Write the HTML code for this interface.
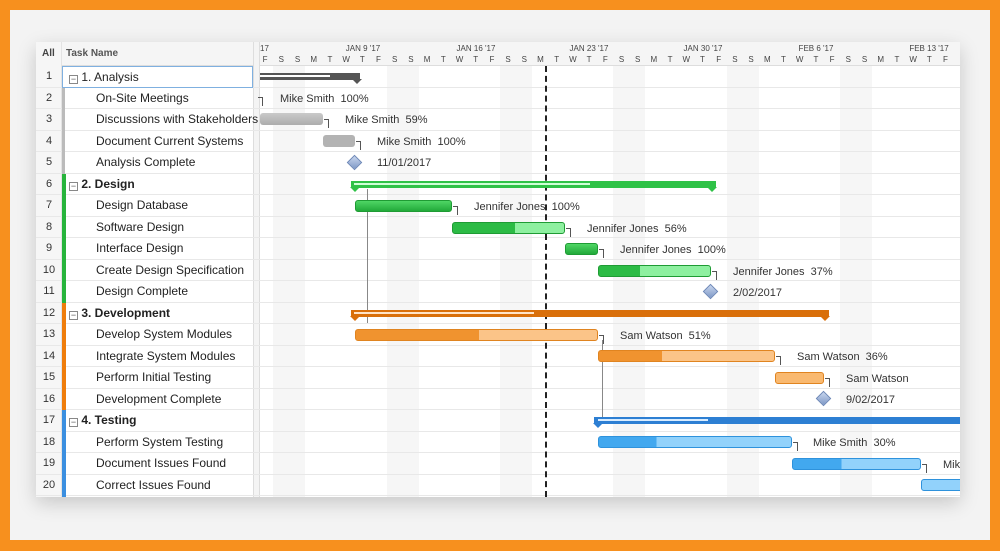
<!DOCTYPE html>
<html><head><meta charset="utf-8"><style>
*{margin:0;padding:0;box-sizing:border-box}
body{width:1000px;height:551px;background:#f7901e;position:relative;overflow:hidden;font-family:"Liberation Sans",sans-serif;color:#222}
.inner{position:absolute;left:10px;top:10px;width:980px;height:530px;background:#f3f3f3}
.card{position:absolute;left:36px;top:42px;width:924px;height:455px;background:#fff;box-shadow:0 6px 18px rgba(0,0,0,.18);overflow:hidden}
.a{position:absolute}
.row{position:absolute;left:0;width:924px;height:21.5px;border-bottom:1px solid #e8e8e8}
.num{position:absolute;left:0;width:26px;text-align:center;font-size:11px;color:#333;line-height:21px}
.tn{position:absolute;font-size:12px;line-height:21px;white-space:nowrap}
.bar{position:absolute;height:12px;border-radius:3px}
.lbl{position:absolute;font-size:11px;white-space:nowrap;color:#333;line-height:12px}
.dh{position:absolute;top:13px;width:16.2px;text-align:center;font-size:8px;color:#444}
.wk{position:absolute;top:2px;font-size:8px;color:#444;transform:translateX(-50%);white-space:nowrap}
.ws{position:absolute;top:0;height:455px;width:32.4px;background:#f6f6f6}
.dia{position:absolute;width:11px;height:11px;transform:rotate(45deg);background:linear-gradient(135deg,#c8d6ee,#7f99c6);border:1px solid #6b86b6}
.arr{position:absolute;width:5px;height:9px;border-top:1px solid #555;border-right:1px solid #555}
</style></head><body>
<div class="inner"></div>
<div class="card">
<div class="ws" style="left:237px"></div>
<div class="ws" style="left:350.6px"></div>
<div class="ws" style="left:464px"></div>
<div class="ws" style="left:577px"></div>
<div class="ws" style="left:691px"></div>
<div class="ws" style="left:804px"></div>
<div class="a" style="left:0;top:0;width:924px;height:24px;background:#f5f5f5;border-bottom:1px solid #ddd"></div>
<div class="a" style="left:0;top:0;width:26px;height:455px;background:#f6f6f6;border-right:1px solid #e3e3e3"></div>
<div class="a" style="left:6px;top:6px;font-size:10px;font-weight:bold;color:#444">All</div>
<div class="a" style="left:30px;top:6px;font-size:10px;font-weight:bold;color:#555">Task Name</div>
<div class="a" style="left:217px;top:0;width:7px;height:455px;background:#f4f4f4;border-left:1px solid #ddd;border-right:1px solid #ddd"></div>
<div class="wk" style="left:224px;transform:none">17</div>
<div class="wk" style="left:327px">JAN 9 '17</div>
<div class="wk" style="left:440px">JAN 16 '17</div>
<div class="wk" style="left:553px">JAN 23 '17</div>
<div class="wk" style="left:667px">JAN 30 '17</div>
<div class="wk" style="left:780px">FEB 6 '17</div>
<div class="wk" style="left:893px">FEB 13 '17</div>
<div class="dh" style="left:221px">F</div><div class="dh" style="left:237.2px">S</div><div class="dh" style="left:253.4px">S</div><div class="dh" style="left:269.6px">M</div><div class="dh" style="left:285.8px">T</div><div class="dh" style="left:302px">W</div><div class="dh" style="left:318.2px">T</div>
<div class="dh" style="left:334.4px">F</div><div class="dh" style="left:350.6px">S</div><div class="dh" style="left:366.8px">S</div><div class="dh" style="left:383px">M</div><div class="dh" style="left:399.2px">T</div><div class="dh" style="left:415.4px">W</div><div class="dh" style="left:431.6px">T</div>
<div class="dh" style="left:447.8px">F</div><div class="dh" style="left:464px">S</div><div class="dh" style="left:480.2px">S</div><div class="dh" style="left:496.4px">M</div><div class="dh" style="left:512.6px">T</div><div class="dh" style="left:528.8px">W</div><div class="dh" style="left:545px">T</div>
<div class="dh" style="left:561.2px">F</div><div class="dh" style="left:577.4px">S</div><div class="dh" style="left:593.6px">S</div><div class="dh" style="left:609.8px">M</div><div class="dh" style="left:626px">T</div><div class="dh" style="left:642.2px">W</div><div class="dh" style="left:658.4px">T</div>
<div class="dh" style="left:674.6px">F</div><div class="dh" style="left:690.8px">S</div><div class="dh" style="left:707px">S</div><div class="dh" style="left:723.2px">M</div><div class="dh" style="left:739.4px">T</div><div class="dh" style="left:755.6px">W</div><div class="dh" style="left:771.8px">T</div>
<div class="dh" style="left:788px">F</div><div class="dh" style="left:804.2px">S</div><div class="dh" style="left:820.4px">S</div><div class="dh" style="left:836.6px">M</div><div class="dh" style="left:852.8px">T</div><div class="dh" style="left:869px">W</div><div class="dh" style="left:885.2px">T</div><div class="dh" style="left:901.4px">F</div>

<div class="row" style="top:24px"></div><div class="row" style="top:45.5px"></div><div class="row" style="top:67px"></div><div class="row" style="top:88.5px"></div><div class="row" style="top:110px"></div><div class="row" style="top:131.5px"></div><div class="row" style="top:153px"></div><div class="row" style="top:174.5px"></div><div class="row" style="top:196px"></div><div class="row" style="top:217.5px"></div><div class="row" style="top:239px"></div><div class="row" style="top:260.5px"></div><div class="row" style="top:282px"></div><div class="row" style="top:303.5px"></div><div class="row" style="top:325px"></div><div class="row" style="top:346.5px"></div><div class="row" style="top:368px"></div><div class="row" style="top:389.5px"></div><div class="row" style="top:411px"></div><div class="row" style="top:432.5px"></div>

<div class="a" style="left:26px;top:45.5px;width:3px;height:86px;background:#bbb"></div>
<div class="a" style="left:26px;top:131.5px;width:4px;height:129px;background:#27b43c"></div>
<div class="a" style="left:26px;top:260.5px;width:4px;height:107.5px;background:#ef7d0b"></div>
<div class="a" style="left:26px;top:368px;width:4px;height:87px;background:#3b8fe0"></div>
<div class="a" style="left:26px;top:24px;width:191px;height:21.5px;border:1px solid #7fb0e0"></div>

<div class="num" style="top:24px">1</div><div class="num" style="top:45.5px">2</div><div class="num" style="top:67px">3</div><div class="num" style="top:88.5px">4</div><div class="num" style="top:110px">5</div><div class="num" style="top:131.5px">6</div><div class="num" style="top:153px">7</div><div class="num" style="top:174.5px">8</div><div class="num" style="top:196px">9</div><div class="num" style="top:217.5px">10</div><div class="num" style="top:239px">11</div><div class="num" style="top:260.5px">12</div><div class="num" style="top:282px">13</div><div class="num" style="top:303.5px">14</div><div class="num" style="top:325px">15</div><div class="num" style="top:346.5px">16</div><div class="num" style="top:368px">17</div><div class="num" style="top:389.5px">18</div><div class="num" style="top:411px">19</div><div class="num" style="top:432.5px">20</div>

<div class="tn" style="left:33px;top:25px"><span style="display:inline-block;width:9px;height:9px;border:1px solid #888;font-size:9px;line-height:6px;text-align:center;vertical-align:-1px;color:#555">−</span> 1. Analysis</div>
<div class="tn" style="left:60px;top:45.5px">On-Site Meetings</div>
<div class="tn" style="left:60px;top:67px">Discussions with Stakeholders</div>
<div class="tn" style="left:60px;top:88.5px">Document Current Systems</div>
<div class="tn" style="left:60px;top:110px">Analysis Complete</div>
<div class="tn" style="left:33px;top:131.5px;font-weight:bold"><span style="display:inline-block;width:9px;height:9px;border:1px solid #888;font-size:9px;line-height:6px;text-align:center;vertical-align:-1px;color:#555;font-weight:normal">−</span> 2. Design</div>
<div class="tn" style="left:60px;top:153px">Design Database</div>
<div class="tn" style="left:60px;top:174.5px">Software Design</div>
<div class="tn" style="left:60px;top:196px">Interface Design</div>
<div class="tn" style="left:60px;top:217.5px">Create Design Specification</div>
<div class="tn" style="left:60px;top:239px">Design Complete</div>
<div class="tn" style="left:33px;top:260.5px;font-weight:bold"><span style="display:inline-block;width:9px;height:9px;border:1px solid #888;font-size:9px;line-height:6px;text-align:center;vertical-align:-1px;color:#555;font-weight:normal">−</span> 3. Development</div>
<div class="tn" style="left:60px;top:282px">Develop System Modules</div>
<div class="tn" style="left:60px;top:303.5px">Integrate System Modules</div>
<div class="tn" style="left:60px;top:325px">Perform Initial Testing</div>
<div class="tn" style="left:60px;top:346.5px">Development Complete</div>
<div class="tn" style="left:33px;top:368px;font-weight:bold"><span style="display:inline-block;width:9px;height:9px;border:1px solid #888;font-size:9px;line-height:6px;text-align:center;vertical-align:-1px;color:#555;font-weight:normal">−</span> 4. Testing</div>
<div class="tn" style="left:60px;top:389.5px">Perform System Testing</div>
<div class="tn" style="left:60px;top:411px">Document Issues Found</div>
<div class="tn" style="left:60px;top:432.5px">Correct Issues Found</div>

<div class="a" style="left:509px;top:24px;height:431px;border-left:2px dashed #222"></div>
<div class="a" style="left:331px;top:147px;width:1px;height:134px;background:#888"></div>
<div class="a" style="left:566px;top:298px;width:1px;height:80px;background:#888"></div>

<div class="bar" style="left:224px;top:31px;width:100px;height:7px;border-radius:0;background:#555"></div>
<div class="a" style="left:224px;top:33px;width:70px;height:2px;background:#fff"></div>
<div class="a" style="left:316px;top:37px;border-left:5px solid transparent;border-right:5px solid transparent;border-top:5px solid #555"></div>

<div class="bar" style="left:315px;top:139px;width:365px;height:7px;border-radius:0;background:#2fc247"></div>
<div class="a" style="left:318px;top:141px;width:236px;height:2px;background:#cfffd6"></div>
<div class="a" style="left:314px;top:145px;border-left:5px solid transparent;border-right:5px solid transparent;border-top:5px solid #2fc247"></div>
<div class="a" style="left:671px;top:145px;border-left:5px solid transparent;border-right:5px solid transparent;border-top:5px solid #2fc247"></div>

<div class="bar" style="left:315px;top:268px;width:478px;height:7px;border-radius:0;background:#d96f0a"></div>
<div class="a" style="left:318px;top:270px;width:180px;height:2px;background:#ffe3c6"></div>
<div class="a" style="left:314px;top:274px;border-left:5px solid transparent;border-right:5px solid transparent;border-top:5px solid #d96f0a"></div>
<div class="a" style="left:784px;top:274px;border-left:5px solid transparent;border-right:5px solid transparent;border-top:5px solid #d96f0a"></div>

<div class="bar" style="left:558px;top:375px;width:370px;height:7px;border-radius:0;background:#2d7fd3"></div>
<div class="a" style="left:562px;top:377px;width:110px;height:2px;background:#d8ecff"></div>
<div class="a" style="left:557px;top:381px;border-left:5px solid transparent;border-right:5px solid transparent;border-top:5px solid #2d7fd3"></div>

<div class="arr" style="left:222px;top:55px"></div>
<div class="lbl" style="left:244px;top:51px">Mike Smith&nbsp; 100%</div>
<div class="bar" style="left:224px;top:71px;width:63px;background:linear-gradient(#c9c9c9,#adadad)"></div>
<div class="arr" style="left:288px;top:77px"></div>
<div class="lbl" style="left:309px;top:72px">Mike Smith&nbsp; 59%</div>
<div class="bar" style="left:287px;top:93px;width:32px;background:#b3b3b3"></div>
<div class="arr" style="left:320px;top:99px"></div>
<div class="lbl" style="left:341px;top:94px">Mike Smith&nbsp; 100%</div>
<div class="dia" style="left:313px;top:115px"></div>
<div class="lbl" style="left:341px;top:115px">11/01/2017</div>

<div class="bar" style="left:319px;top:158px;width:97px;background:linear-gradient(#4fd665,#22aa3a);border:1px solid #1f9b34"></div>
<div class="arr" style="left:417px;top:164px"></div>
<div class="lbl" style="left:438px;top:159px">Jennifer Jones&nbsp; 100%</div>
<div class="bar" style="left:416px;top:180px;width:113px;background:linear-gradient(90deg,#2cbb45 0 56%,#8ef0a0 56%);border:1px solid #1f9b34"></div>
<div class="arr" style="left:530px;top:186px"></div>
<div class="lbl" style="left:551px;top:181px">Jennifer Jones&nbsp; 56%</div>
<div class="bar" style="left:529px;top:201px;width:33px;background:linear-gradient(#4fd665,#22aa3a);border:1px solid #1f9b34"></div>
<div class="arr" style="left:563px;top:207px"></div>
<div class="lbl" style="left:584px;top:202px">Jennifer Jones&nbsp; 100%</div>
<div class="bar" style="left:562px;top:223px;width:113px;background:linear-gradient(90deg,#2cbb45 0 37%,#8ef0a0 37%);border:1px solid #1f9b34"></div>
<div class="arr" style="left:676px;top:229px"></div>
<div class="lbl" style="left:697px;top:224px">Jennifer Jones&nbsp; 37%</div>
<div class="dia" style="left:669px;top:244px"></div>
<div class="lbl" style="left:697px;top:245px">2/02/2017</div>

<div class="bar" style="left:319px;top:287px;width:243px;background:linear-gradient(90deg,#f0932f 0 51%,#fbc488 51%);border:1px solid #e08420"></div>
<div class="arr" style="left:563px;top:293px"></div>
<div class="lbl" style="left:584px;top:288px">Sam Watson&nbsp; 51%</div>
<div class="bar" style="left:562px;top:308px;width:177px;background:linear-gradient(90deg,#f0932f 0 36%,#fbc488 36%);border:1px solid #e08420"></div>
<div class="arr" style="left:740px;top:314px"></div>
<div class="lbl" style="left:761px;top:309px">Sam Watson&nbsp; 36%</div>
<div class="bar" style="left:739px;top:330px;width:49px;background:#f9b970;border:1px solid #e08420"></div>
<div class="arr" style="left:789px;top:336px"></div>
<div class="lbl" style="left:810px;top:331px">Sam Watson</div>
<div class="dia" style="left:782px;top:351px"></div>
<div class="lbl" style="left:810px;top:352px">9/02/2017</div>

<div class="bar" style="left:562px;top:394px;width:194px;background:linear-gradient(90deg,#42a8ef 0 30%,#92d2fb 30%);border:1px solid #2e92dc"></div>
<div class="arr" style="left:757px;top:400px"></div>
<div class="lbl" style="left:777px;top:395px">Mike Smith&nbsp; 30%</div>
<div class="bar" style="left:756px;top:416px;width:129px;background:linear-gradient(90deg,#42a8ef 0 38%,#92d2fb 38%);border:1px solid #2e92dc"></div>
<div class="arr" style="left:886px;top:422px"></div>
<div class="lbl" style="left:907px;top:417px">Mik</div>
<div class="bar" style="left:885px;top:437px;width:50px;background:#92d2fb;border:1px solid #2e92dc"></div>
</div>
</body></html>
